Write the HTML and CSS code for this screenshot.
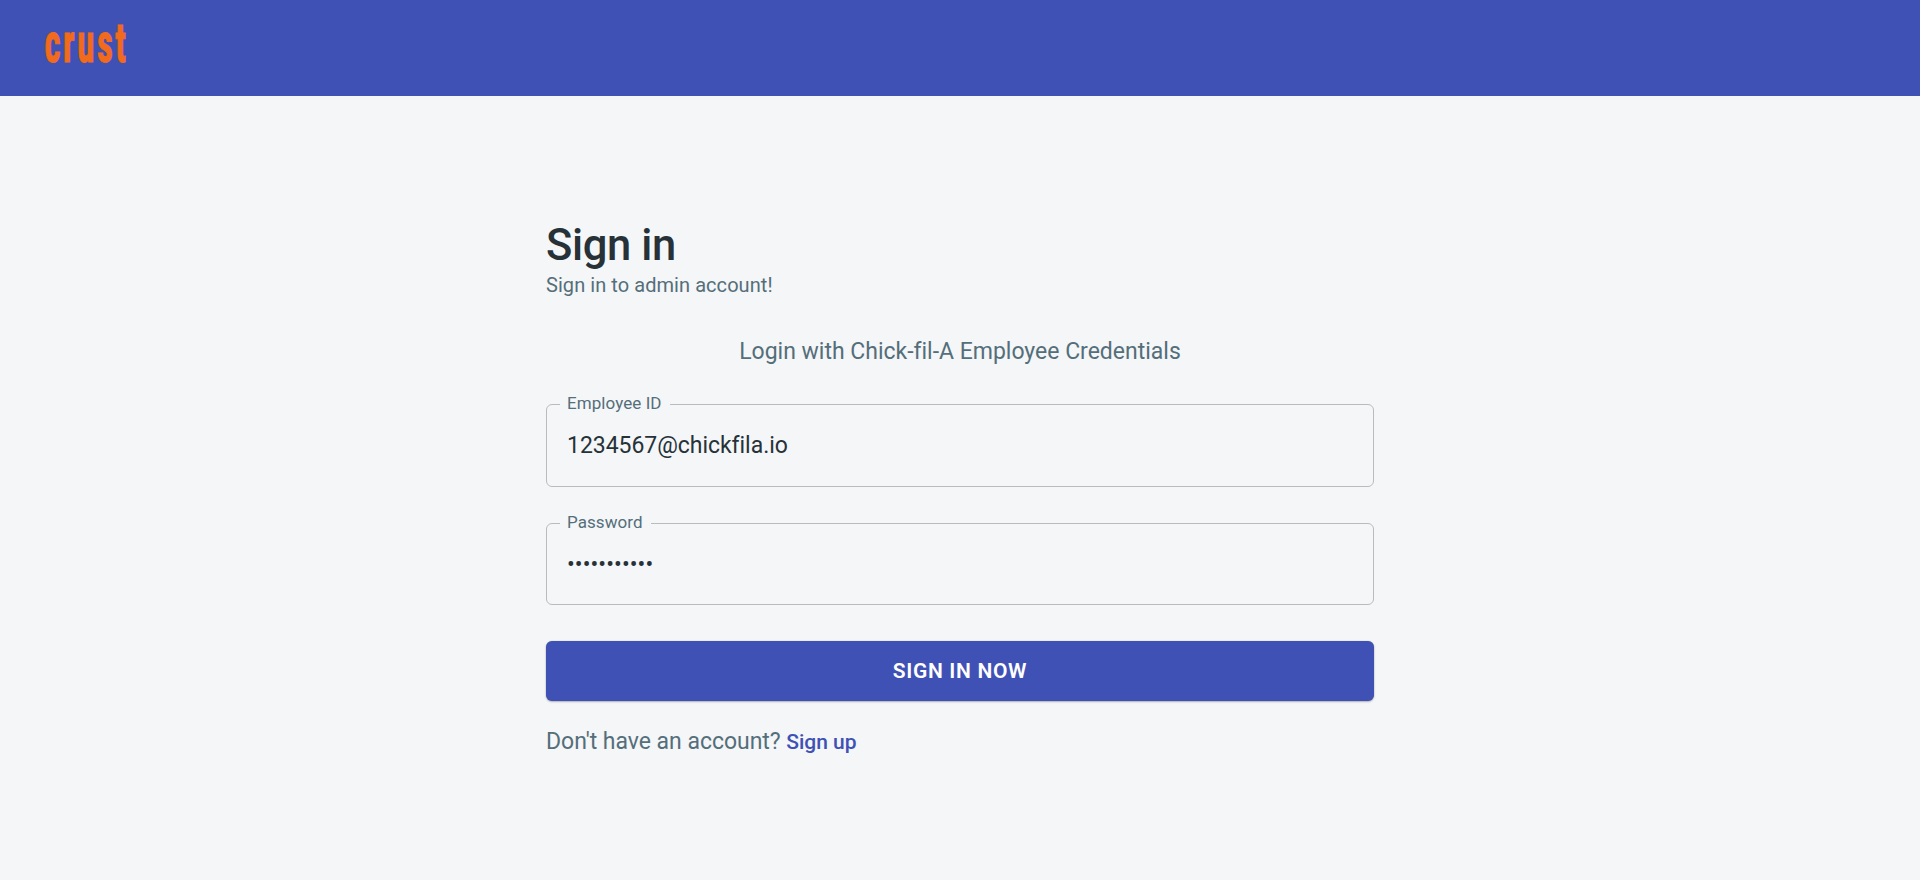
FILE: index.html
```html
<!DOCTYPE html>
<html lang="en">
<head>
  <meta charset="utf-8">
  <title>Sign in</title>
  <link rel="stylesheet" href="styles.css">
</head>
<body>
  <header class="topbar">
    <svg class="logo" width="110" height="76" viewBox="0 0 110 76" role="img" aria-label="crust">
      <text class="logo-text" x="3.5" y="53.5" textLength="84" lengthAdjust="spacingAndGlyphs">crust</text>
    </svg>
  </header>
  <main class="content">
    <form class="form">
      <h1 class="title">Sign in</h1>
      <p class="subtitle">Sign in to admin account!</p>
      <p class="hint">Login with Chick-fil-A Employee Credentials</p>
      <fieldset class="field">
        <legend class="label">Employee ID</legend>
        <input class="input" type="text" value="1234567@chickfila.io" aria-label="Employee ID">
      </fieldset>
      <fieldset class="field field-password">
        <legend class="label">Password</legend>
        <input class="input input-password" type="password" value="12345678901" aria-label="Password">
      </fieldset>
      <button class="submit" type="button">Sign in now</button>
      <p class="signup">Don't have an account? <a class="link" href="#">Sign up</a></p>
    </form>
  </main>
</body>
</html>
```

FILE: styles.css
```css
* {
  box-sizing: border-box;
}

body {
  margin: 0;
  min-height: 100vh;
  background: #f4f6f8;
  font-family: Roboto, "Liberation Sans", sans-serif;
  font-variant-ligatures: none;
  color: #263238;
}

.topbar {
  height: 96px;
  padding: 8px 41px;
  background: #3f51b5;
}

.logo {
  display: block;
  overflow: visible;
}

.logo-text {
  font-size: 55px;
  font-weight: 700;
  font-stretch: 75%;
  letter-spacing: 4px;
  fill: #f26a1b;
  stroke: #f26a1b;
  stroke-width: 1px;
}

.content {
  display: flex;
  justify-content: center;
  padding-top: 126px;
}

.form {
  display: flex;
  flex-direction: column;
  width: 828px;
}

.title {
  margin: 0;
  font-size: 43.5px;
  font-weight: 500;
  line-height: 48px;
  letter-spacing: -0.36px;
}

.subtitle {
  margin: 0;
  font-size: 20px;
  line-height: 30px;
  letter-spacing: 0.06px;
  color: #546e7a;
}

.hint {
  margin: 33px 0 0;
  font-size: 23px;
  line-height: 37px;
  letter-spacing: -0.01px;
  text-align: center;
  color: #546e7a;
}

.field {
  min-width: 0;
  height: 93px;
  margin: 24px 0 0;
  padding: 0 20px;
  border: 1px solid #b9bbbd;
  border-radius: 6px;
}

.field-password {
  height: 92px;
  margin-top: 26px;
}

.label {
  margin-left: -7px;
  padding: 0 8px 2px 7px;
  font-size: 17px;
  line-height: 19px;
  letter-spacing: 0.07px;
  color: #546e7a;
}

.input {
  display: block;
  width: 100%;
  height: 28px;
  margin: 17px 0 0;
  padding: 0;
  border: 0;
  outline: 0;
  background: transparent;
  font: 400 23px/28px Roboto, "Liberation Sans", sans-serif;
  font-variant-ligatures: none;
  letter-spacing: -0.04px;
  color: #263238;
}

.input-password {
  letter-spacing: 0.08px;
}

.submit {
  height: 60px;
  margin: 36px 0 0;
  padding: 0;
  border: 0;
  border-radius: 6px;
  background: #3f51b5;
  box-shadow: 0 0 1px rgba(0, 0, 0, .31), 0 1px 2px rgba(0, 0, 0, .25);
  font: 600 21px/36px Roboto, "Liberation Sans", sans-serif;
  letter-spacing: .65px;
  text-transform: uppercase;
  color: #fff;
}

.signup {
  margin: 22px 0 0;
  font-size: 23px;
  line-height: 37px;
  letter-spacing: -0.03px;
  color: #546e7a;
}

.link {
  font-size: 21px;
  font-weight: 500;
  text-decoration: none;
  color: #3f51b5;
}
```
